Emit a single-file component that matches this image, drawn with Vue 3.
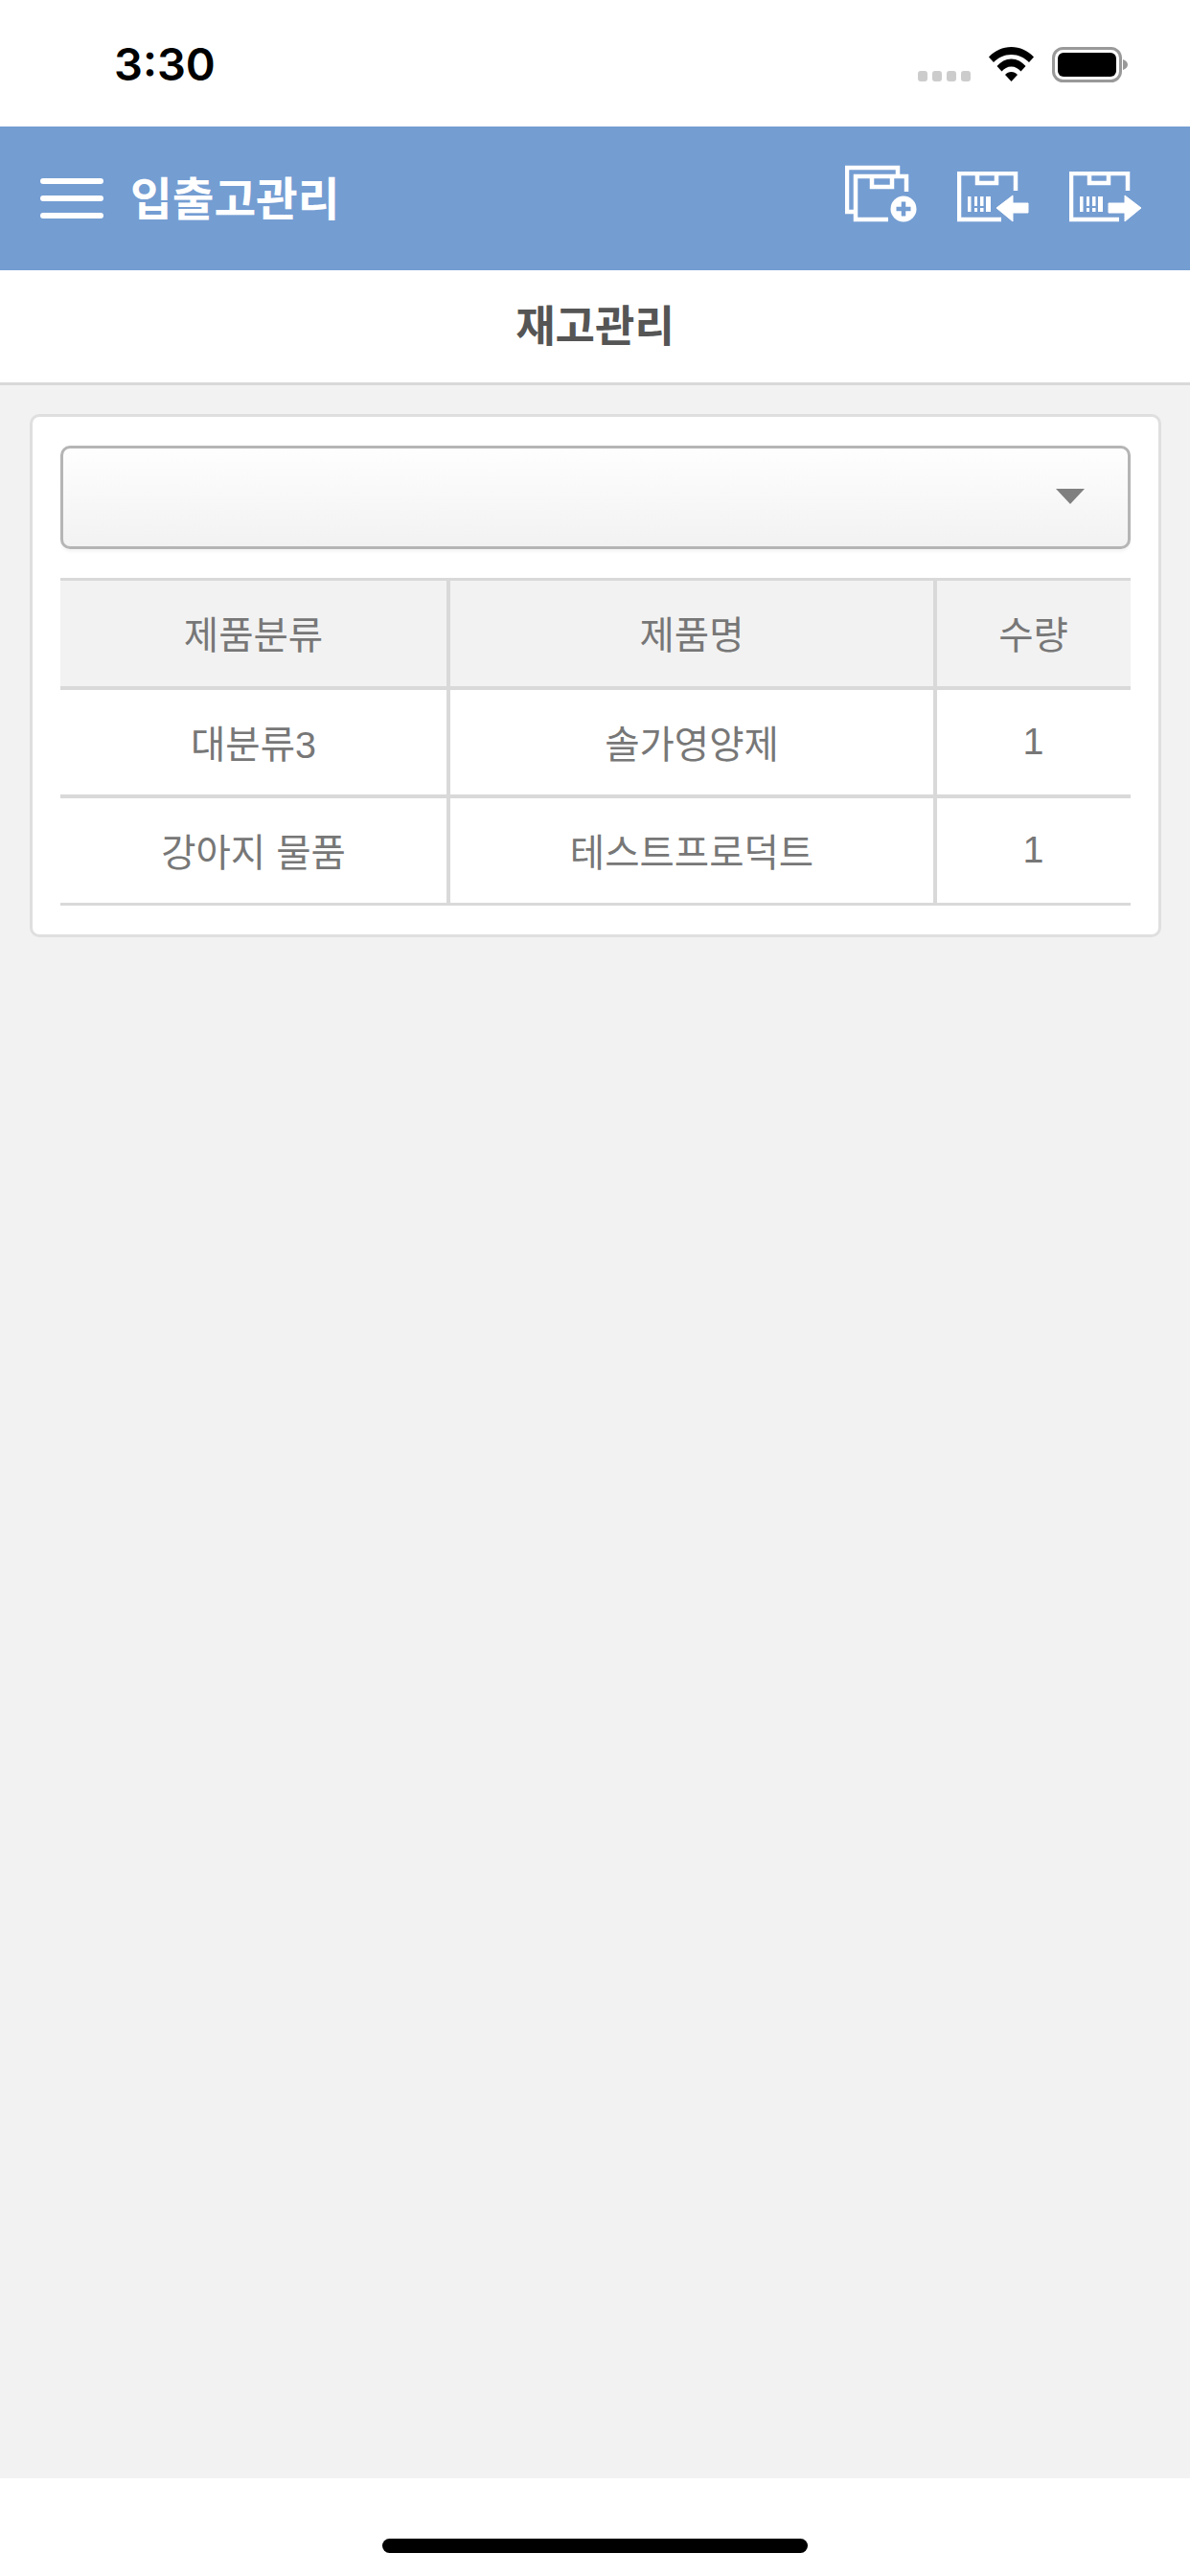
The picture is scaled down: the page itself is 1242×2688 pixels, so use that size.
<script setup>
const headers = ["제품분류", "제품명", "수량"];
const rows = [
  { category: "대분류3", name: "솔가영양제", qty: 1 },
  { category: "강아지 물품", name: "테스트프로덕트", qty: 1 },
];
</script>

<template>
  <div class="page">
    <div class="status_bar">
      <span class="time">3:30</span>
      <div class="status_right">
        <div class="signal">
          <span v-for="n in 4" :key="n" class="signal_dot"></span>
        </div>
        <svg class="wifi" width="47" height="36" viewBox="0 0 47 36">
          <path d="M0 10.500C6.500 3.800 14.500 0 23.500 0S40.500 3.800 47 10.500L42 16C37 11 31 8 23.500 8S10 11 5 16Z" fill="#000" />
          <path d="M8.500 20C12.500 15.500 17.500 12.500 23.500 12.500S34.500 15.500 38.500 20L33.500 25.500C31 22.500 27.500 20.500 23.500 20.500S16 22.500 13.500 25.500Z" fill="#000" />
          <path d="M17 29C18.800 27.200 21 26 23.500 26S28.200 27.200 30 29L23.500 36Z" fill="#000" />
        </svg>
        <svg class="battery" width="79" height="37" viewBox="0 0 79 37">
          <rect x="1.500" y="1.500" width="70" height="34" rx="10" fill="none" stroke="#999" stroke-width="3" />
          <rect x="6" y="6" width="61" height="25" rx="6" fill="#000" />
          <path d="M74 13C77 14 79 16 79 18.500S77 23 74 24Z" fill="#999" />
        </svg>
      </div>
    </div>

    <header class="app_header">
      <div class="menu_icon">
        <span></span>
        <span></span>
        <span></span>
      </div>
      <h1 class="app_title">입출고관리</h1>
      <div class="header_icons">
        <svg width="75" height="62" viewBox="0 0 75 62">
          <path d="M55 14V5H2V51H10" fill="none" stroke="#fff" stroke-width="4.500" />
          <path d="M45 59H11V14H64V30" fill="none" stroke="#fff" stroke-width="4.500" />
          <path d="M28 14V25H49V14" fill="none" stroke="#fff" stroke-width="4.500" />
          <circle cx="61" cy="48" r="13.500" fill="#fff" />
          <path d="M61 40.500V55.500M53.500 48H68.500" stroke="#749dd2" stroke-width="4.500" />
        </svg>
        <svg width="75" height="54" viewBox="0 0 75 54" class="box_icon">
          <path d="M46 50H2V2H61V20" fill="none" stroke="#fff" stroke-width="4.500" />
          <path d="M21 2V12H41V2" fill="none" stroke="#fff" stroke-width="4.500" />
          <path d="M11 26H14.500V42H11ZM18 26H21V36H18ZM18 38H21V42H18ZM24 26H27.500V36H24ZM24 38H27.500V42H24ZM30 26H35V42H30Z" fill="#fff" />
          <path d="M41 38L58 25V33H74V43H58V52Z" fill="#fff" stroke="#fff" stroke-width="1" stroke-linejoin="round" />
        </svg>
        <svg width="76" height="54" viewBox="0 0 76 54" class="box_icon">
          <path d="M52 50H2V2H61V20" fill="none" stroke="#fff" stroke-width="4.500" />
          <path d="M21 2V12H41V2" fill="none" stroke="#fff" stroke-width="4.500" />
          <path d="M11 26H14.500V42H11ZM18 26H21V36H18ZM18 38H21V42H18ZM24 26H27.500V36H24ZM24 38H27.500V42H24ZM30 26H35V42H30Z" fill="#fff" />
          <path d="M75 38L58 25V33H41V43H58V52Z" fill="#fff" stroke="#fff" stroke-width="1" stroke-linejoin="round" />
        </svg>
      </div>
    </header>

    <div class="sub_title">재고관리</div>

    <main class="content">
      <section class="card">
        <div class="select_box">
          <span class="select_arrow"></span>
        </div>
        <div class="stock_table">
          <div class="table_row table_head">
            <div v-for="h in headers" :key="h" class="table_cell">{{ h }}</div>
          </div>
          <div v-for="(row, index) in rows" :key="index" class="table_row">
            <div class="table_cell">{{ row.category }}</div>
            <div class="table_cell">{{ row.name }}</div>
            <div class="table_cell">{{ row.qty }}</div>
          </div>
        </div>
      </section>
    </main>

    <footer class="home_area">
      <span class="home_bar"></span>
    </footer>
  </div>
</template>

<style>
html,
body {
  margin: 0;
  background: #f2f2f2;
}
</style>

<style scoped>
.page {
  height: 2688px;
  display: flex;
  flex-direction: column;
  font-family: "Liberation Sans", "Noto Sans CJK KR", sans-serif;
}

.status_bar {
  height: 132px;
  box-sizing: border-box;
  background: #fff;
  display: flex;
  justify-content: space-between;
  padding: 0 65px 0 119px;
}

.time {
  font-family: Inter, sans-serif;
  font-size: 47px;
  font-weight: 600;
  line-height: 132px;
  height: 132px;
  margin-top: 1px;
  color: #000;
}

.status_right {
  display: flex;
  padding-top: 49px;
  align-items: flex-start;
}

.signal {
  display: flex;
  gap: 5px;
  margin-top: 25px;
  margin-right: 19px;
}

.signal_dot {
  width: 10px;
  height: 11px;
  border-radius: 3px;
  background: #ccc;
}

.battery {
  margin-left: 19px;
}

.app_header {
  height: 150px;
  box-sizing: border-box;
  background: #749dd2;
  display: flex;
  align-items: center;
  padding: 0 50px 0 42px;
}

.menu_icon {
  width: 66px;
  display: flex;
  flex-direction: column;
  gap: 12px;
}

.menu_icon span {
  height: 6px;
  border-radius: 3px;
  background: #fff;
}

.app_title {
  margin: 0 0 6px 28px;
  font-size: 47.500px;
  font-weight: 700;
  color: #fff;
}

.header_icons {
  margin-left: auto;
  display: flex;
  align-items: flex-start;
  gap: 42px;
  height: 62px;
  margin-bottom: 13px;
}

.box_icon {
  margin-top: 9px;
}

.sub_title {
  height: 120px;
  box-sizing: border-box;
  background: #fff;
  border-bottom: 3px solid #d9d9d9;
  text-align: center;
  font-size: 45px;
  font-weight: 700;
  line-height: 120px;
  color: #555;
}

.content {
  flex: 1;
  background: #f2f2f2;
  padding: 30px 30px 0 31px;
}

.card {
  background: #fff;
  border: 3px solid #dfdfdf;
  border-radius: 10px;
  padding: 30px 29px 30px 29px;
}

.select_box {
  height: 108px;
  box-sizing: border-box;
  border: 3px solid #b5b5b5;
  border-radius: 10px;
  background: linear-gradient(#fefefe, #f2f2f2);
  box-shadow: 0 3px 3px rgba(0, 0, 0, 0.04);
  display: flex;
  align-items: center;
  justify-content: flex-end;
  padding: 0 45px 2px 0;
}

.select_arrow {
  width: 0;
  height: 0;
  border-left: 15px solid transparent;
  border-right: 15px solid transparent;
  border-top: 16px solid #808080;
}

.stock_table {
  margin-top: 30px;
  border-top: 3px solid #d9d9d9;
  color: #777;
  font-size: 39.500px;
}

.table_row {
  display: grid;
  grid-template-columns: 407px 508px 201px;
  height: 113px;
  box-sizing: border-box;
  border-bottom: 4px solid #d9d9d9;
}

.table_row:last-child {
  height: 112px;
  border-bottom-width: 3px;
}

.table_head {
  height: 114px;
  background: #f2f2f2;
}

.table_cell {
  display: flex;
  align-items: center;
  justify-content: center;
  border-right: 4px solid #d9d9d9;
  padding-bottom: 3px;
}

.table_cell:last-child {
  border-right: none;
}

.home_area {
  height: 102px;
  background: #fff;
  display: flex;
  justify-content: center;
  padding-top: 63px;
  box-sizing: border-box;
}

.home_bar {
  width: 444px;
  height: 15px;
  border-radius: 8px;
  background: #000;
}
</style>
